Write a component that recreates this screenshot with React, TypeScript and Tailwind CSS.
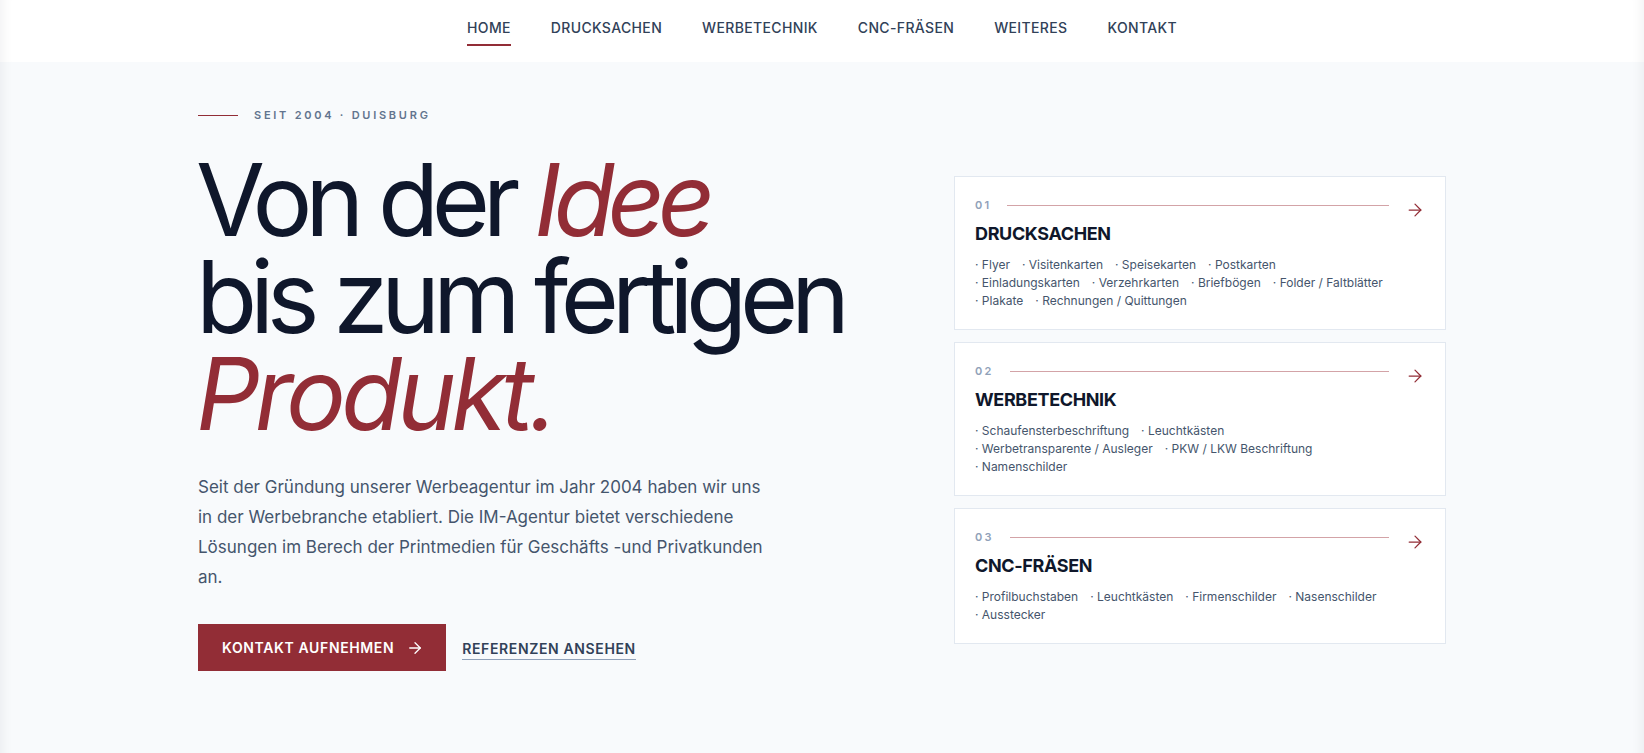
import { ArrowRight } from 'lucide-react'

const NAV = ['Home', 'Drucksachen', 'Werbetechnik', 'CNC-Fräsen', 'Weiteres', 'Kontakt']

const SERVICES = [
    {
        no: '01',
        title: 'Drucksachen',
        rows: [
            ['Flyer', 'Visitenkarten', 'Speisekarten', 'Postkarten'],
            ['Einladungskarten', 'Verzehrkarten', 'Briefbögen', 'Folder / Faltblätter'],
            ['Plakate', 'Rechnungen / Quittungen'],
        ],
    },
    {
        no: '02',
        title: 'Werbetechnik',
        rows: [
            ['Schaufensterbeschriftung', 'Leuchtkästen'],
            ['Werbetransparente / Ausleger', 'PKW / LKW Beschriftung'],
            ['Namenschilder'],
        ],
    },
    {
        no: '03',
        title: 'CNC-Fräsen',
        rows: [
            ['Profilbuchstaben', 'Leuchtkästen', 'Firmenschilder', 'Nasenschilder'],
            ['Ausstecker'],
        ],
    },
]

const EDGE = 'shadow-[inset_14px_0_14px_-14px_rgba(15,23,42,0.08),inset_-14px_0_14px_-14px_rgba(15,23,42,0.08)]'

function ServiceCard({ no, title, rows }: { no: string; title: string; rows: string[][] }) {
    return (
        <div className="flex gap-4 border border-slate-200 bg-white px-5 pb-[19px] pt-5">
            <div className="min-w-0 flex-1">
                <div className="flex items-center gap-4">
                    <span className="text-[11px] font-semibold leading-4 tracking-[0.2em] text-slate-400">{no}</span>
                    <span className="h-px flex-1 bg-[#d3a3a7]" />
                </div>
                <h3 className="mt-[9px] text-[18px] font-bold uppercase leading-6 tracking-[-0.02em] text-slate-900">
                    {title}
                </h3>
                <div className="mt-[10px] text-[12px] leading-[18px] text-slate-600">
                    {rows.map((row, i) => (
                        <div key={i} className="flex gap-x-3">
                            {row.map((item) => (
                                <span key={item}>· {item}</span>
                            ))}
                        </div>
                    ))}
                </div>
            </div>
            <ArrowRight className="mt-[3px] h-5 w-5 shrink-0 text-[#922d36]" strokeWidth={1.5} />
        </div>
    )
}

export default function App() {
    return (
        <div className={`min-h-screen bg-slate-50 font-['Inter',sans-serif] ${EDGE}`}>
            <header className={`h-[62px] bg-white shadow-[0_2px_14px_rgba(15,23,42,0.06)] ${EDGE}`}>
                <nav className="flex justify-center gap-10 pt-[18px]">
                    {NAV.map((item, i) => (
                        <a
                            key={item}
                            href="#"
                            className={`border-b-2 pb-[6px] text-sm font-medium uppercase leading-5 tracking-wide text-slate-700 ${
                                i === 0 ? 'border-[#922d36]' : 'border-transparent'
                            }`}
                        >
                            {item}
                        </a>
                    ))}
                </nav>
            </header>

            <main className="mx-auto max-w-7xl px-4 pt-[45px]">
                <div className="grid grid-cols-12 gap-x-12">
                    <div className="col-span-7">
                        <div className="flex items-center gap-4">
                            <span className="h-px w-10 bg-[#922d36]" />
                            <span className="text-[11px] font-semibold uppercase leading-4 tracking-[0.25em] text-slate-500">
                                Seit 2004 · Duisburg
                            </span>
                        </div>

                        <h1 className="-ml-[2px] mt-[28px] text-[100px] font-normal leading-[97px] tracking-[-0.073em] text-slate-900">
                            Von der <em className="text-[#922d36]">Idee</em>
                            <br />
                            bis zum fertigen
                            <br />
                            <em className="tracking-[-0.05em] text-[#922d36]">Produkt.</em>
                        </h1>

                        <p className="mt-[30px] max-w-[580px] text-[17px] leading-[30px] text-slate-600">
                            Seit der Gründung unserer Werbeagentur im Jahr 2004 haben wir uns in der Werbebranche
                            etabliert. Die IM-Agentur bietet verschiedene Lösungen im Berech der Printmedien für
                            Geschäfts -und Privatkunden an.
                        </p>

                        <div className="mt-8 flex items-center gap-4">
                            <a
                                href="#"
                                className="flex h-[47px] items-center gap-3 bg-[#922d36] pl-6 pr-[22px] text-sm font-semibold uppercase tracking-[0.045em] text-white"
                            >
                                Kontakt aufnehmen
                                <ArrowRight className="h-[18px] w-[18px]" strokeWidth={1.75} />
                            </a>
                            <a
                                href="#"
                                className="border-b border-slate-400 pt-1 text-sm font-semibold uppercase leading-5 tracking-[0.045em] text-slate-700"
                            >
                                Referenzen ansehen
                            </a>
                        </div>
                    </div>

                    <div className="col-span-5 mt-[69px] flex flex-col gap-3">
                        {SERVICES.map((s) => (
                            <ServiceCard key={s.no} {...s} />
                        ))}
                    </div>
                </div>
            </main>
        </div>
    )
}
